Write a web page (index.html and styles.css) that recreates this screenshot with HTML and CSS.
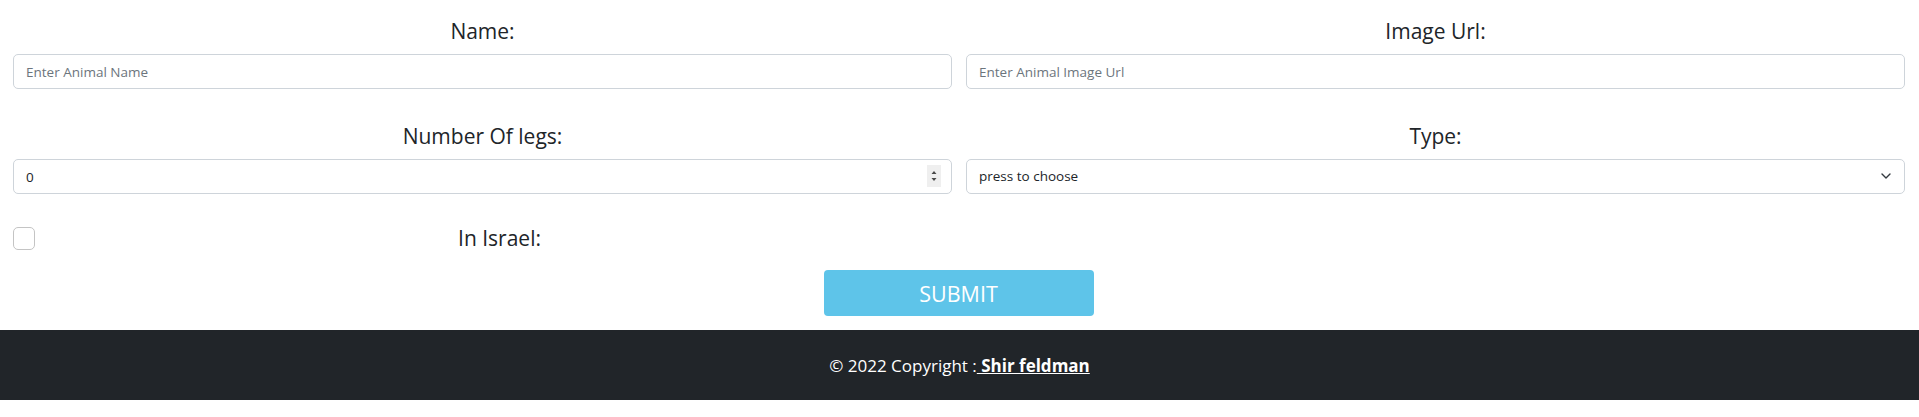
FILE: index.html
```html
<!DOCTYPE html>
<html lang="en">
<head>
<meta charset="utf-8">
<title>Add Animal</title>
<link rel="stylesheet" href="styles.css">
</head>
<body>
<form class="animal-form">
  <div class="field-grid">
    <div class="field">
      <label class="field-label" for="name">Name:</label>
      <input class="control" id="name" type="text" placeholder="Enter Animal Name">
    </div>
    <div class="field">
      <label class="field-label" for="image">Image Url:</label>
      <input class="control" id="image" type="text" placeholder="Enter Animal Image Url">
    </div>
    <div class="field">
      <label class="field-label" for="legs">Number Of legs:</label>
      <div class="number-wrap">
        <input class="control control-number" id="legs" type="number" value="0">
        <span class="spinner" aria-hidden="true">
          <svg viewBox="0 0 14 22" width="14" height="22"><path d="M4.5 9L7 6l2.5 3z M4.5 13l2.5 3 2.5-3z" fill="#4a4a4a"/></svg>
        </span>
      </div>
    </div>
    <div class="field">
      <label class="field-label" for="type">Type:</label>
      <div class="select-wrap">
        <select class="control control-select" id="type">
          <option>press to choose</option>
        </select>
        <svg class="select-chevron" viewBox="0 0 10 6" width="10" height="6" aria-hidden="true"><path d="M1 1l4 4 4-4" fill="none" stroke="#343a40" stroke-width="1.4" stroke-linecap="round" stroke-linejoin="round"/></svg>
      </div>
    </div>
  </div>
  <div class="check-row">
    <div class="check-cell">
      <input class="check" id="israel" type="checkbox">
      <label class="check-label" for="israel">In Israel:</label>
    </div>
  </div>
  <div class="actions">
    <button class="submit" type="button">SUBMIT</button>
  </div>
</form>
<footer class="site-footer">
  <span>© 2022 Copyright :</span><a class="footer-link" href="#"> Shir feldman</a>
</footer>
</body>
</html>
```
FILE: styles.css
```css
* { box-sizing: border-box; }

body {
  margin: 0;
  font-family: "Open Sans", "Noto Sans", sans-serif;
  color: #212529;
  background: #fff;
}

.animal-form {
  padding: 14px 14px 0 13px;
}

.field-grid {
  display: grid;
  grid-template-columns: 1fr 1fr;
  column-gap: 14px;
  row-gap: 30px;
}

.field {
  display: flex;
  flex-direction: column;
}

.field-label {
  display: block;
  text-align: center;
  font-size: 21px;
  line-height: 27px;
  height: 31px;
  padding-top: 4px;
  margin-bottom: 9px;
  color: #212529;
}

.control {
  display: block;
  width: 100%;
  height: 35px;
  padding: 6px 12px;
  font-family: inherit;
  font-size: 13.5px;
  line-height: 21px;
  color: #212529;
  background: #fff;
  border: 1px solid #ced4da;
  border-radius: 5px;
  outline: none;
}

.control::placeholder {
  color: #6c757d;
}

.number-wrap,
.select-wrap {
  position: relative;
}

.control-number {
  appearance: textfield;
  -moz-appearance: textfield;
}

.control-number::-webkit-inner-spin-button,
.control-number::-webkit-outer-spin-button {
  -webkit-appearance: none;
  margin: 0;
}

.spinner {
  position: absolute;
  right: 11px;
  top: 6px;
  width: 14px;
  height: 22px;
  background: #efefef;
  display: block;
  pointer-events: none;
}

.spinner svg {
  display: block;
}

.control-select {
  appearance: none;
  -webkit-appearance: none;
  padding-right: 36px;
}

.select-chevron {
  position: absolute;
  right: 14px;
  top: 14px;
  pointer-events: none;
}

.check-row {
  display: grid;
  grid-template-columns: 1fr 1fr;
  column-gap: 14px;
  margin-top: 27px;
}

.check-cell {
  display: flex;
  align-items: center;
  height: 31px;
}

.check {
  appearance: none;
  -webkit-appearance: none;
  width: 22px;
  height: 23px;
  margin: 4px 0 0 0;
  border: 1px solid #c4c4c4;
  border-radius: 5px;
  background: #fff;
  flex: none;
}

.check-label {
  flex: 1;
  text-align: center;
  padding-left: 12px;
  padding-top: 4px;
  height: 31px;
  font-size: 21px;
  line-height: 27px;
}

.actions {
  display: flex;
  justify-content: center;
  margin-top: 18px;
  padding-right: 1px;
}

.submit {
  width: 270px;
  height: 46px;
  padding: 0;
  font-family: inherit;
  font-size: 21.5px;
  color: #fff;
  background: #5ec4e9;
  border: none;
  border-radius: 4px;
}

.site-footer {
  margin-top: 14px;
  height: 70px;
  display: flex;
  align-items: center;
  justify-content: center;
  background: #212529;
  color: #fff;
  font-size: 17px;
}

.footer-link {
  color: #fff;
  font-weight: 700;
  text-decoration: underline;
  white-space: pre;
}
```
